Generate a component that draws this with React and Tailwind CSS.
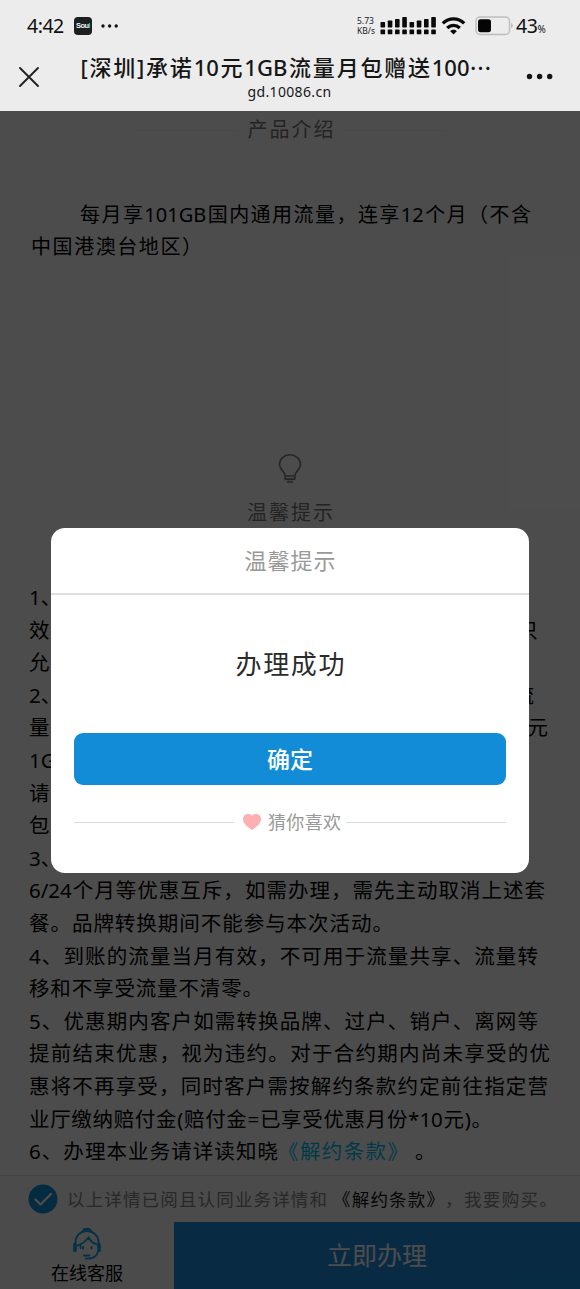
import { useState } from "react";

const FONT = "font-['Noto_Sans','Noto_Sans_CJK_SC',sans-serif]";

// rows behind the dialog only show their two ends
const COVERED_LINES = [
  { start: "1、" },
  { start: "效", end: "只", width: 509 },
  { start: "允" },
  { start: "2、", end: "流", width: 505 },
  { start: "量", end: "元", width: 519 },
  { start: "1G" },
  { start: "请" },
  { start: "包" },
  { start: "3、" },
];

// each row is stretched to its own width so characters keep an even rhythm
const NOTICE_LINES = [
  { text: "6/24个月等优惠互斥，如需办理，需先主动取消上述套", width: 516 },
  { text: "餐。品牌转换期间不能参与本次活动。", width: 364 },
  { text: "4、到账的流量当月有效，不可用于流量共享、流量转", width: 509 },
  { text: "移和不享受流量不清零。", width: 234 },
  { text: "5、优惠期内客户如需转换品牌、过户、销户、离网等", width: 509 },
  { text: "提前结束优惠，视为违约。对于合约期内尚未享受的优", width: 521 },
  { text: "惠将不再享受，同时客户需按解约条款约定前往指定营", width: 519 },
  { text: "业厅缴纳赔付金(赔付金=已享受优惠月份*10元)。", width: 463 },
];

function Line({ text, width }) {
  return (
    <p className="whitespace-nowrap [text-align-last:justify] [text-spacing-trim:space-all]" style={{ width }}>
      {text}
    </p>
  );
}

function SignalBars() {
  const tops = [6, 4.5, 3, 1, 6, 4.5, 3, 1];
  return (
    <svg width="57" height="20" viewBox="0 0 57 20" fill="#0a0a0a">
      {tops.map((y, i) => (
        <g key={i}>
          <rect x={0.5 + i * 7.25} y={y} width="4.6" height={11.5 - y} rx="0.7" />
          <rect x={0.5 + i * 7.25} y="13.5" width="4.6" height="4.8" rx="0.9" />
        </g>
      ))}
    </svg>
  );
}

function StatusBar() {
  return (
    <div className="flex h-[52px] items-center pl-[27px] text-[#111]">
      <span className="w-[38px] whitespace-nowrap text-[19.5px] leading-none tracking-[-0.5px]">4:42</span>
      <div className="ml-[9px] flex h-[18px] w-[18px] items-center justify-center rounded-[4px] bg-[#1c1f20] font-['Liberation_Sans',sans-serif] text-[7.5px] font-bold tracking-[-0.6px] text-gray-100">
        Sou<span className="text-teal-400">l</span>
      </div>
      <svg className="ml-[9px]" width="18" height="4" fill="#111">
        <circle cx="2" cy="2" r="1.7" />
        <circle cx="8.6" cy="2" r="1.7" />
        <circle cx="15.2" cy="2" r="1.7" />
      </svg>
      <div className="ml-[238px] w-[21px] whitespace-nowrap text-[8.5px] leading-[10px] text-[#222]">
        <div>5.73</div>
        <div>KB/s</div>
      </div>
      <div className="ml-[2px]">
        <SignalBars />
      </div>
      <svg className="ml-[4px]" width="25" height="20" viewBox="0 0 25 20" fill="none" stroke="#0a0a0a" strokeWidth="3.4">
        <path d="M1.8 7.4C8 1.4 17 1.4 23.2 7.4" />
        <path d="M6.2 12C10 8.6 15 8.6 18.8 12" />
        <path d="M9.2 15.2C11 13.4 14 13.4 15.8 15.2L12.5 18.5Z" fill="#0a0a0a" stroke="none" />
      </svg>
      <svg className="ml-[9px]" width="39" height="20" viewBox="0 0 39 20">
        <rect x="1" y="1" width="33.5" height="17.5" rx="4" fill="none" stroke="#bdbdbd" strokeWidth="1.4" />
        <rect x="3" y="3.2" width="13" height="13" rx="2.6" fill="#050505" />
        <path d="M36 7v5q1.8-.5 1.8-2.5T36 7Z" fill="#bdbdbd" />
      </svg>
      <span className="ml-[2px] whitespace-nowrap text-[19.5px] leading-none tracking-[-0.4px]">
        43<span className="text-[10px] tracking-normal">%</span>
      </span>
    </div>
  );
}

function NavBar() {
  return (
    <div className="flex h-[59px] items-start pl-[19px] text-[#161616]">
      <svg className="mt-[15px]" width="20" height="20" viewBox="0 0 20 20" stroke="#222" strokeWidth="1.9" strokeLinecap="round">
        <path d="M1 1l18 18M19 1L1 19" />
      </svg>
      <div className="ml-[41px] flex w-[412px] flex-col items-center">
        <h1 className="w-[411px] whitespace-nowrap text-[22px] font-medium leading-[28px] [text-align-last:justify]">
          [深圳]承诺10元1GB流量月包赠送100<span className="font-['Noto_Sans_CJK_SC']">⋯</span>
        </h1>
        <p className="mr-[-7px] text-[14px] leading-[21px] tracking-[0.35px]">gd.10086.cn</p>
      </div>
      <svg className="ml-[34px] mt-[21px]" width="27" height="7" fill="#151515">
        <circle cx="3.5" cy="3.5" r="2.7" />
        <circle cx="13.6" cy="3.5" r="2.7" />
        <circle cx="23.7" cy="3.5" r="2.7" />
      </svg>
    </div>
  );
}

function BulbIcon() {
  return (
    <svg width="24" height="30" viewBox="0 0 24 30" fill="none" stroke="#808080" strokeWidth="1.6">
      <path d="M7.2 22C7.2 17.500 1.500 16 1.500 10.500a10.500 9.700 0 0 1 21 0C22.500 16 16.800 17.500 16.800 22V25H7.200Z" />
      <path d="M7.200 22h9.600M7.500 25.500h9M9 28h6" />
    </svg>
  );
}

function ServiceIcon() {
  return (
    <svg width="30" height="32" viewBox="0 0 30 32" fill="none" stroke="#12a4ea" strokeWidth="1.8" strokeLinecap="round">
      <path d="M3.500 17V14a11.500 11 0 0 1 23 0v3" />
      <path d="M10.500 4.200Q11.500 1 13 1h4q1.500 0 2.500 3.200" />
      <path d="M5.500 17.500Q12 15.500 16.500 9.500Q19 14.500 25 16.500M8.500 17v3" />
      <path d="M3 16.500v6M27 16.500v6" strokeWidth="3.600" />
      <path d="M26 23.500Q24.500 29.500 18 30.500M12 27.500h5.500M14 30.500h3.500" />
      <path d="M11 19v1.500M19.500 19v1.500" strokeWidth="2" />
    </svg>
  );
}

function Page() {
  return (
    <div className="flex h-full flex-col bg-white">
      <section className="h-[338px]">
        <div className="flex items-center justify-center gap-2.5 pt-[3px]">
          <span className="h-px w-[100px] bg-[#f0f0f0]" />
          <h2 className="ml-[1px] w-[86px] whitespace-nowrap text-[20px] leading-[32px] text-[#777] [text-align-last:justify]">产品介绍</h2>
          <span className="h-px w-[100px] bg-[#f0f0f0]" />
        </div>
        <div className="mt-[53px] text-[20px] leading-[32px] text-black">
          <div className="pl-[80px]">
            <Line text="每月享101GB国内通用流量，连享12个月（不含" width={451} />
          </div>
          <div className="pl-[31px]">
            <Line text="中国港澳台地区）" width={171} />
          </div>
        </div>
      </section>

      <section className="flex flex-1 flex-col">
        <div className="flex flex-col items-center pt-[5px]">
          <BulbIcon />
          <h2 className="mt-[13px] w-[86px] whitespace-nowrap text-[20px] leading-[32px] text-[#777] [text-align-last:justify]">温馨提示</h2>
        </div>
        <div className="mt-[52px] pl-[29px] text-[20.500px] leading-[32.600px] text-black">
          {COVERED_LINES.map(({ start, end, width }) => (
            <p key={start} className="flex justify-between whitespace-nowrap" style={{ width }}>
              <span>{start}</span>
              {end && <span>{end}</span>}
            </p>
          ))}
          {NOTICE_LINES.map((line) => (
            <Line key={line.text} {...line} />
          ))}
          <div className="flex">
            <Line text="6、办理本业务请详读知晓" width={249} />
            <a className="w-[130px] whitespace-nowrap text-[#00c4f5] [text-align-last:justify]">《解约条款》</a>
            <span className="ml-[7px]">。</span>
          </div>
        </div>
      </section>
    </div>
  );
}

function BottomBar() {
  return (
    <div className="absolute inset-x-0 bottom-0 bg-[#fafafa]">
      <div className="flex h-[47px] items-center border-t border-[#e2dcdc] pl-[28px]">
        <svg width="30" height="30" viewBox="0 0 30 30">
          <circle cx="15" cy="15" r="14.500" fill="#128fd9" />
          <path d="M7.500 15.500l5 5L23 10" fill="none" stroke="#fff" strokeWidth="2.400" strokeLinecap="round" strokeLinejoin="round" />
        </svg>
        <p className="ml-[9px] flex whitespace-nowrap text-[17.500px] text-[#888]">
          <span className="w-[260px] [text-align-last:justify]">以上详情已阅且认同业务详情和</span>
          <span className="ml-[6px] w-[111px] text-[#111] [text-align-last:justify]">《解约条款》</span>
          <span className="ml-[1px] w-[112px] [text-align-last:justify] [text-spacing-trim:space-all]">，我要购买。</span>
        </p>
      </div>
      <div className="flex h-[67px]">
        <div className="flex w-[174px] flex-col items-center pt-[6px]">
          <ServiceIcon />
          <span className="text-[18px] leading-[26px] text-black">在线客服</span>
        </div>
        <button className="flex-1 bg-[#1c8fe2] text-[25px] text-white">立即办理</button>
      </div>
    </div>
  );
}

function Dialog({ onClose }) {
  return (
    <div className="absolute left-[51px] top-[417px] flex h-[345px] w-[478px] flex-col rounded-[14px] bg-white">
      <div className="flex h-[67px] items-center justify-center border-b-2 border-[#dedede] text-[22px] text-[#999]">
        <span className="w-[91px] whitespace-nowrap [text-align-last:justify]">温馨提示</span>
      </div>
      <div className="flex h-[138px] items-center justify-center text-[26px] text-[#2b2b2b]">
        <span className="w-[109px] whitespace-nowrap [text-align-last:justify]">办理成功</span>
      </div>
      <button
        type="button"
        onClick={onClose}
        className="mx-[23px] h-[52px] rounded-[9px] bg-[#128cd7] text-[23px] font-medium text-white"
      >
        确定
      </button>
      <div className="mx-[23px] mt-[23px] flex h-[28px] items-center text-[18px] text-[#999]">
        <span className="h-px w-[160px] bg-[#dcdcdc]" />
        <svg className="ml-[9px]" width="18" height="17" viewBox="0 0 18 17" fill="#ffafb1">
          <path d="M9 16C5.500 13.200 0 10 0 5.200C0 0 6.500-1.500 9 2C11.500-1.500 18 0 18 5.200C18 10 12.500 13.200 9 16Z" />
        </svg>
        <span className="ml-[7px] w-[73px] whitespace-nowrap [text-align-last:justify]">猜你喜欢</span>
        <span className="ml-[5px] h-px flex-1 bg-[#dcdcdc]" />
      </div>
    </div>
  );
}

export default function App() {
  const [open, setOpen] = useState(true);

  return (
    <div className={`${FONT} flex h-[1289px] w-[580px] flex-col overflow-hidden`}>
      <header className="h-[111px] shrink-0 bg-[#ececec]">
        <StatusBar />
        <NavBar />
      </header>
      <main className="relative flex-1 overflow-hidden">
        <Page />
        <BottomBar />
        {open && (
          <>
            <div className="absolute inset-0 bg-black/70" />
            <Dialog onClose={() => setOpen(false)} />
          </>
        )}
      </main>
    </div>
  );
}
